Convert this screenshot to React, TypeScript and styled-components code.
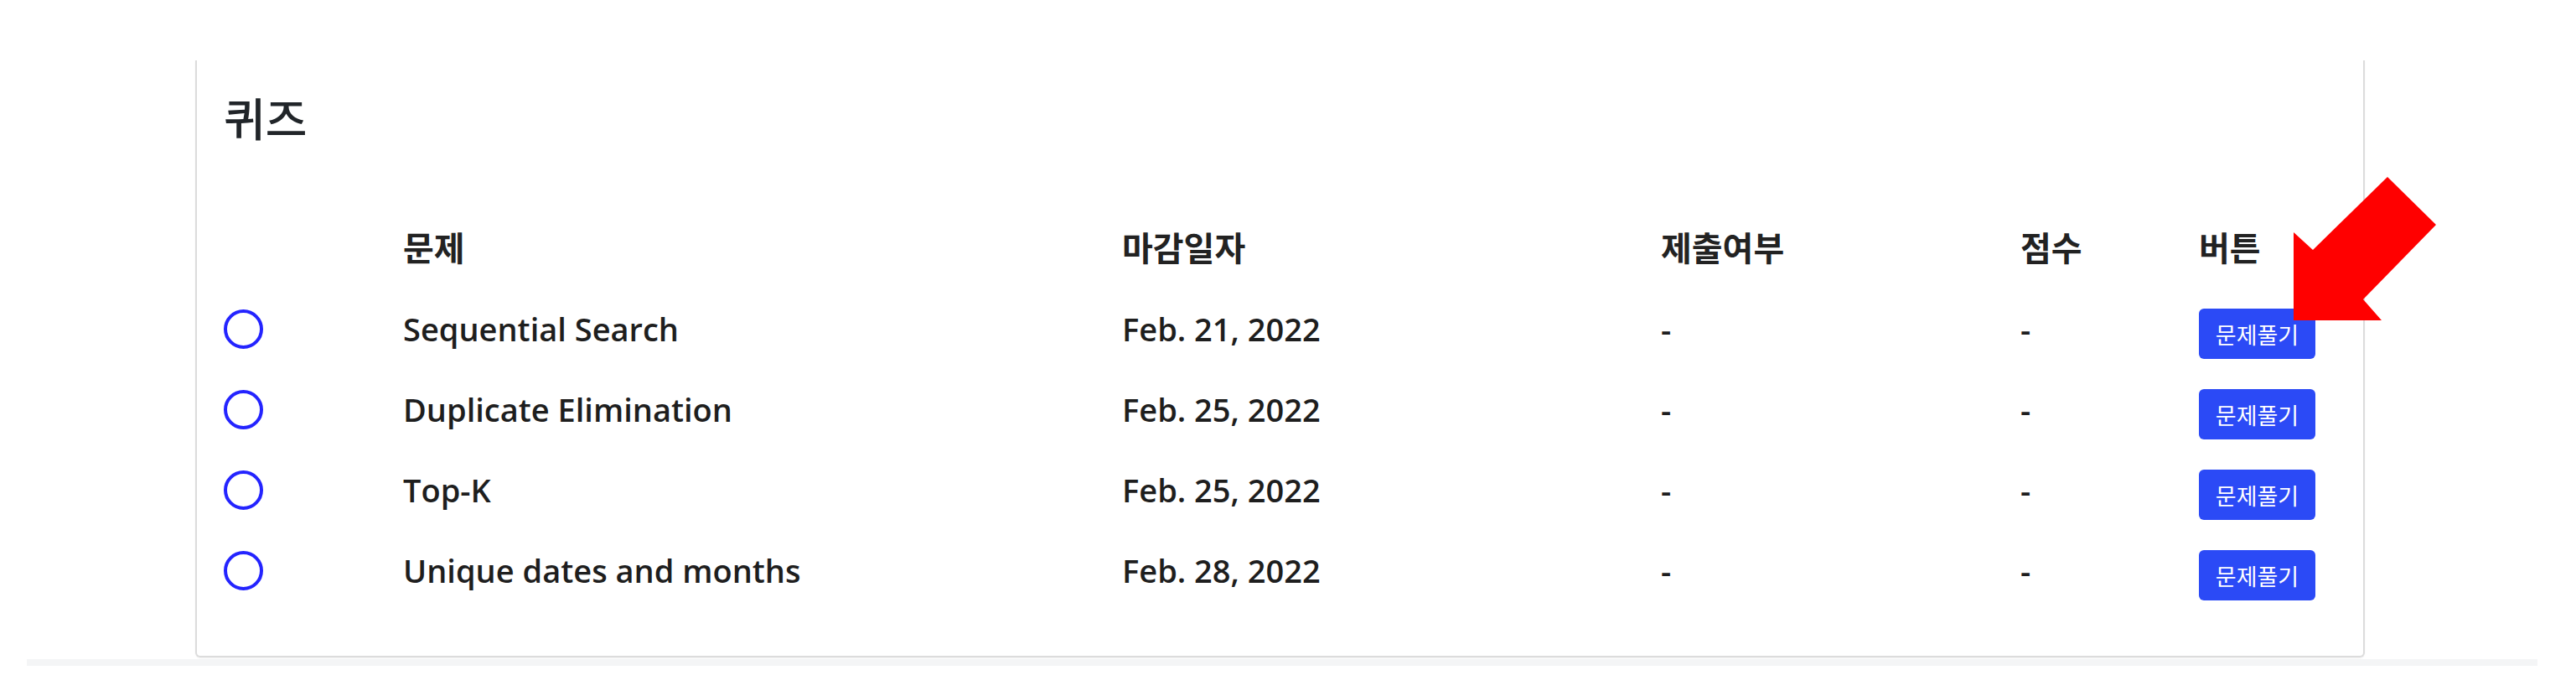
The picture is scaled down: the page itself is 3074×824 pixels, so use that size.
import React from "react";
import styled, { createGlobalStyle } from "styled-components";

const GlobalStyle = createGlobalStyle`
  html, body { margin: 0; padding: 0; background: #ffffff; }
  body {
    font-family: "Open Sans", "Noto Sans CJK KR", sans-serif;
    color: #212529;
  }
`;

const Page = styled.div`
  position: relative;
  width: 3074px;
  height: 824px;
  padding-top: 72px;
  box-sizing: border-box;
  overflow: hidden;
`;

const Card = styled.section`
  margin-left: 233px;
  width: 2589px;
  height: 712px;
  box-sizing: border-box;
  border: 2px solid #dcdcdc;
  border-top: none;
  border-radius: 0 0 6px 6px;
  padding: 35px 32px 0 32px;
  background: #ffffff;
  box-shadow: 0 1px 2px rgba(0, 0, 0, 0.06);
`;

const Title = styled.h2`
  margin: 0;
  font-family: "Noto Sans CJK KR", sans-serif;
  font-size: 54px;
  font-weight: 500;
  line-height: 65px;
  color: #212529;
`;

const Table = styled.div`
  margin-top: 72px;
  display: flex;
  flex-direction: column;
`;

const Row = styled.div<{ $head?: boolean }>`
  display: grid;
  grid-template-columns: 214px 858px 643px 429px 213px 1fr;
  height: ${(p) => (p.$head ? "100px" : "96px")};
  align-items: center;
`;

const HeadCell = styled.div`
  font-family: "Noto Sans CJK KR", sans-serif;
  font-size: 40px;
  font-weight: 700;
  line-height: 1;
  color: #222222;
`;

const Cell = styled.div`
  font-family: "Open Sans", "Noto Sans CJK KR", sans-serif;
  font-size: 38px;
  font-weight: 600;
  line-height: 1;
  display: flex;
  align-items: center;
  color: #1e1e1e;
`;

const Radio = styled.span`
  display: block;
  width: 47px;
  height: 47px;
  box-sizing: border-box;
  border: 4px solid #2424ff;
  border-radius: 50%;
`;

const SolveButton = styled.button`
  width: 139px;
  height: 60px;
  margin-top: 12px;
  padding: 0;
  border: none;
  border-radius: 6px;
  background: #2b4af6;
  color: #ffffff;
  font-family: "Noto Sans CJK KR", sans-serif;
  font-size: 27px;
  font-weight: 400;
  line-height: 1;
  cursor: pointer;
`;

const FooterStrip = styled.div`
  margin: 2px 46px 0 32px;
  height: 8px;
  background: #f4f5f6;
`;

const ArrowMark = styled.svg`
  position: absolute;
  left: 2730px;
  top: 205px;
  width: 185px;
  height: 185px;
`;

const quizzes = [
  { title: "Sequential Search", due: "Feb. 21, 2022" },
  { title: "Duplicate Elimination", due: "Feb. 25, 2022" },
  { title: "Top-K", due: "Feb. 25, 2022" },
  { title: "Unique dates and months", due: "Feb. 28, 2022" },
];

export default function App() {
  return (
    <>
      <GlobalStyle />
      <Page>
        <Card>
          <Title>퀴즈</Title>
          <Table>
            <Row $head>
              <HeadCell />
              <HeadCell>문제</HeadCell>
              <HeadCell>마감일자</HeadCell>
              <HeadCell>제출여부</HeadCell>
              <HeadCell>점수</HeadCell>
              <HeadCell>버튼</HeadCell>
            </Row>
            {quizzes.map((q) => (
              <Row key={q.title}>
                <Cell>
                  <Radio />
                </Cell>
                <Cell>{q.title}</Cell>
                <Cell>{q.due}</Cell>
                <Cell>-</Cell>
                <Cell>-</Cell>
                <Cell>
                  <SolveButton>문제풀기</SolveButton>
                </Cell>
              </Row>
            ))}
          </Table>
        </Card>
        <FooterStrip />
        <ArrowMark viewBox="0 0 185 185">
          <polygon
            points="119,6 177,63 90,152 112,177 7,177 7,72 30,93"
            fill="#ff0000"
          />
        </ArrowMark>
      </Page>
    </>
  );
}
